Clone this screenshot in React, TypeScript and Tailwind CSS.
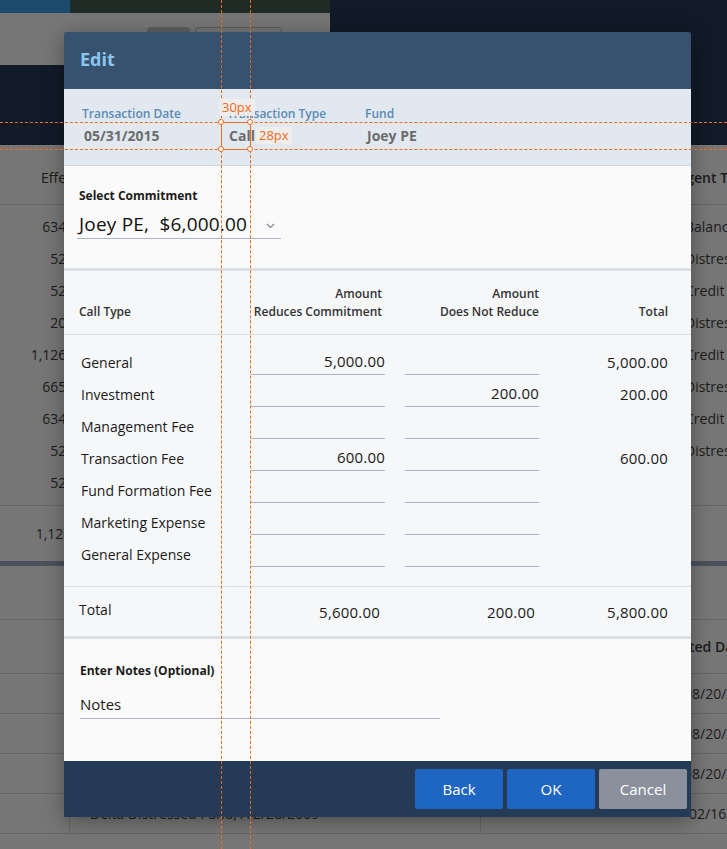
import React from 'react';

const font = { fontFamily: '"Open Sans", "Liberation Sans", sans-serif' };

const callTypes = [
  { name: 'General', reduces: '5,000.00', notReduce: '', total: '5,000.00' },
  { name: 'Investment', reduces: '', notReduce: '200.00', total: '200.00' },
  { name: 'Management Fee', reduces: '', notReduce: '', total: '' },
  { name: 'Transaction Fee', reduces: '600.00', notReduce: '', total: '600.00' },
  { name: 'Fund Formation Fee', reduces: '', notReduce: '', total: '' },
  { name: 'Marketing Expense', reduces: '', notReduce: '', total: '' },
  { name: 'General Expense', reduces: '', notReduce: '', total: '' },
];

const bgRows = [
  { left: '634', right: 'Balance' },
  { left: '52', right: 'Distress' },
  { left: '52', right: 'Credit F' },
  { left: '20', right: 'Distress' },
  { left: '1,126', right: 'Credit F' },
  { left: '665', right: 'Distress' },
  { left: '634', right: 'Credit F' },
  { left: '52', right: 'Distress' },
  { left: '52', right: '' },
];

// dimmed page behind the dialog
function Background() {
  return (
    <div className="absolute inset-0 bg-[#767676] text-[14px] text-[#1c1c1c]">
      <div className="flex h-[145px] flex-col bg-[#111a27]">
        <div className="flex h-[13px] w-[330px]">
          <div className="w-[70px] bg-[#1b4a6c]" />
          <div className="flex-1 bg-[#1f2b25]" />
        </div>
        <div className="flex h-[52px] w-[330px] items-start gap-[5px] bg-[#767676] pl-[147px] pt-[14px]">
          <div className="h-[20px] w-[43px] rounded-sm bg-[#5f5f5f]" />
          <div className="h-[20px] w-[87px] rounded-sm border border-[#5a5a5a]" />
        </div>
      </div>
      <div className="flex h-[60px] items-center whitespace-nowrap border-b border-[#666] pt-[6px]">
        <span className="w-[85px] pl-[41px]">Effective</span>
        <span className="ml-[592px] font-semibold">Agent Transaction</span>
      </div>
      <div className="pt-[5px]">
        {bgRows.map((r, i) => (
          <div key={i} className="flex h-[32px] items-center whitespace-nowrap">
            <span className="w-[86px] shrink-0 text-right">{r.left}.00</span>
            <span className="ml-[599px]">{r.right}</span>
          </div>
        ))}
      </div>
      <div className="mt-[7px] flex h-[56px] items-center border-t border-[#666]">
        <span className="w-[91px] text-right">1,126.00</span>
      </div>
      <div className="h-[5px] bg-[#4a515c]" />
      <div className="h-[54px] border-b border-[#666]" />
      <div className="flex h-[54px] items-center whitespace-nowrap border-b border-[#666]">
        <span className="ml-[665px] font-semibold">Posted Date</span>
      </div>
      {['08/20/2015', '08/20/2015', '08/20/2015'].map((d, i) => (
        <div key={i} className="flex h-[40px] items-center whitespace-nowrap border-b border-[#666]">
          <span className="ml-[684px]">{d}</span>
        </div>
      ))}
      <div className="flex h-[40px] items-center whitespace-nowrap border-b border-[#666]">
        <div className="h-full w-[70px] shrink-0 border-r border-[#666]" />
        <span className="w-[410px] shrink-0 pl-[20px]">Delta Distressed Fund, A 2/28/2009</span>
        <div className="h-full w-[0px] border-r border-[#666]" />
        <span className="ml-[208px]">02/16/2015</span>
      </div>
    </div>
  );
}

function Underline({ value }: { value: string }) {
  return (
    <div className="flex h-[26px] items-center justify-end border-b border-[#a9b3c1] text-[15px] tracking-[0.2px] text-[#1a1a1a]">
      {value}
    </div>
  );
}

function Modal() {
  return (
    <div className="absolute left-[64px] top-[32px] w-[627px] overflow-hidden rounded-t-[2px] shadow-[0_4px_20px_rgba(0,0,0,0.35)]">
      <div className="flex h-[57px] items-center bg-[#37526f] pb-[2px] pl-[16px]">
        <h1 className="text-[18px] font-bold text-[#8cc6f0]">Edit</h1>
      </div>

      <div className="flex h-[77px] border-b border-[#cfd6de] bg-[#e1e8ef] pl-[18px] pt-[17px]">
        {[
          ['Transaction Date', '05/31/2015', 'w-[145px]'],
          ['Transaction Type', 'Call', 'w-[138px]'],
          ['Fund', 'Joey PE', 'w-[140px]'],
        ].map(([label, value, w]) => (
          <div key={label} className={w}>
            <div className="text-[12px] font-semibold leading-[16px] text-[#5b8ab4]">{label}</div>
            <div className="mt-[4px] pl-[2px] text-[14px] font-bold leading-[20px] text-[#6c6c6c]">{value}</div>
          </div>
        ))}
      </div>

      <div className="h-[102px] bg-[#fafafa] pl-[13px] pt-[22px]">
        <div className="pl-[2px] text-[12px] font-bold leading-[16px] text-[#1a1a1a]">Select Commitment</div>
        <div className="mt-[3px] flex h-[32px] w-[204px] items-center justify-between border-b border-[#a9b3c1] pl-[2px] pr-[6px] pt-[4px]">
          <span className="whitespace-pre text-[19px] tracking-[0.2px] text-[#111]">Joey PE,  $6,000.00</span>
          <svg width="9" height="6" viewBox="0 0 9 6" className="mt-[2px]">
            <path d="M1 1l3.5 3.5L8 1" fill="none" stroke="#7d8794" strokeWidth="1.2" />
          </svg>
        </div>
      </div>

      <div className="h-[3px] bg-[#dcdfe4]" />

      <div className="bg-[#f6f7f9]">
        <div className="grid h-[64px] grid-cols-[172px_134px_20px_134px_1fr] items-center border-b border-[#dcdfe4] pl-[15px] pr-[23px] text-[12px] font-semibold leading-[18px] text-[#333]">
          <div className="pt-[18px]">Call Type</div>
          <div className="pr-[3px] text-right">
            Amount
            <br />
            Reduces Commitment
          </div>
          <div />
          <div className="text-right">
            Amount
            <br />
            Does Not Reduce
          </div>
          <div className="pt-[18px] text-right">Total</div>
        </div>

        <div className="pb-[16px] pt-[11px]">
          {callTypes.map((row) => (
            <div
              key={row.name}
              className="grid h-[32px] grid-cols-[170px_134px_20px_134px_1fr] items-center pl-[17px] pr-[23px] text-[14px] text-[#1a1a1a]"
            >
              <div>{row.name}</div>
              <Underline value={row.reduces} />
              <div />
              <Underline value={row.notReduce} />
              <div className="text-right text-[15px] tracking-[0.2px]">{row.total}</div>
            </div>
          ))}
        </div>

        <div className="grid h-[50px] grid-cols-[170px_131px_20px_135px_1fr] items-center border-t border-[#dcdfe4] pl-[15px] pr-[23px] text-[15px] tracking-[0.2px] text-[#1a1a1a]">
          <div className="pb-[4px] text-[14px] tracking-normal">Total</div>
          <div className="pt-[2px] text-right">5,600.00</div>
          <div />
          <div className="pt-[2px] text-right">200.00</div>
          <div className="pt-[2px] text-right">5,800.00</div>
        </div>
      </div>

      <div className="h-[3px] bg-[#dcdfe4]" />

      <div className="h-[122px] bg-[#fafafa] pl-[16px] pt-[24px]">
        <div className="text-[12px] font-bold leading-[16px] text-[#1a1a1a]">Enter Notes (Optional)</div>
        <div className="mt-[11px] flex h-[29px] w-[360px] items-center border-b border-[#a9b3c1] text-[15px] text-[#1a1a1a]">
          Notes
        </div>
      </div>

      <div className="flex h-[56px] items-center justify-end gap-[4px] bg-[#243a55] pr-[4px]">
        <button className="h-[40px] w-[88px] rounded-[2px] bg-[#1f65c2] text-[15px] text-white">Back</button>
        <button className="h-[40px] w-[88px] rounded-[2px] bg-[#1f65c2] text-[15px] text-white">OK</button>
        <button className="h-[40px] w-[88px] rounded-[2px] bg-[#8a919d] text-[15px] text-white">Cancel</button>
      </div>
    </div>
  );
}

// spacing inspector overlay drawn on top of the screenshot
function Measure() {
  const dot = 'absolute h-[6px] w-[6px] rounded-full border border-[#f26a1b] bg-white';
  return (
    <div className="pointer-events-none absolute inset-0">
      <div className="absolute left-[221px] top-0 h-full border-l border-dashed border-[#f26a1b]" />
      <div className="absolute left-[250px] top-0 h-full border-l border-dashed border-[#f26a1b]" />
      <div className="absolute left-0 top-[122px] w-full border-t border-dashed border-[#f26a1b]" />
      <div className="absolute left-0 top-[149px] w-full border-t border-dashed border-[#f26a1b]" />
      <div className="absolute left-[221px] top-[122px] h-[28px] w-[30px] border border-[#f26a1b]" />
      <div className={`${dot} left-[218px] top-[119px]`} />
      <div className={`${dot} left-[247px] top-[119px]`} />
      <div className={`${dot} left-[218px] top-[146px]`} />
      <div className={`${dot} left-[247px] top-[146px]`} />
      <div className="absolute left-[219px] top-[99px] rounded-[2px] bg-[#f1eeec]/90 px-[3px] text-[13px] leading-[17px] text-[#f26a1b]">
        30px
      </div>
      <div className="absolute left-[256px] top-[127px] rounded-[2px] bg-[#f1eeec]/90 px-[3px] text-[13px] leading-[17px] text-[#f26a1b]">
        28px
      </div>
    </div>
  );
}

export default function App() {
  return (
    <div className="relative h-[849px] w-[727px] overflow-hidden" style={font}>
      <Background />
      <Modal />
      <Measure />
    </div>
  );
}
